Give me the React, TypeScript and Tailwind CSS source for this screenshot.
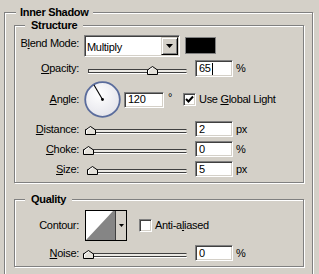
import React from 'react';

const etched = 'border border-[#808080] shadow-[inset_1px_1px_0_#fff,1px_1px_0_#fff]';
const sunken =
  'border border-t-[#808080] border-l-[#808080] border-b-white border-r-white shadow-[inset_1px_1px_0_#404040,inset_-1px_-1px_0_#d4d0c8]';

const K = ({ children }: { children: React.ReactNode }) => (
  <span className="underline underline-offset-[1px]">{children}</span>
);

const Label = ({ children, className = '' }: { children: React.ReactNode; className?: string }) => (
  <div className={`w-[64px] shrink-0 text-right leading-[13px] ${className}`}>{children}</div>
);

const Field = ({ value, className = 'w-[38px] h-[16px]', caret = false }: { value: string; className?: string; caret?: boolean }) => (
  <div className={`${sunken} ${className} bg-white flex items-center pl-[3px] leading-[13px]`}>
    {value}
    {caret && <span className="ml-[1px] inline-block w-[1px] h-[12px] bg-black" />}
  </div>
);

const Thumb = () => (
  <svg width="11" height="9" viewBox="0 0 11 9">
    <polygon points="0.5,8.5 0.5,4 5.5,0.5 10.5,4 10.5,8.5" fill="#e4e1da" stroke="#000" />
    <polyline points="1.5,7.5 1.5,4.5 5.5,1.7" fill="none" stroke="#fff" />
  </svg>
);

const Slider = ({ className, pos }: { className: string; pos: number }) => (
  <div className={`relative h-[16px] shrink-0 ${className}`}>
    <div className="mt-[8px] h-[4px] border border-[#404040] border-r-[#d4d0c8] bg-[#ebe9e4] shadow-[0_1px_0_#fff]" />
    <div className="absolute top-[5px] leading-none" style={{ left: pos }}>
      <Thumb />
    </div>
  </div>
);

const Check = ({ checked }: { checked: boolean }) => (
  <div className={`${sunken} w-[13px] h-[13px] shrink-0 bg-white flex items-center justify-center`}>
    {checked && (
      <svg width="9" height="9" viewBox="0 0 9 9">
        <path d="M1 4 L3.5 6.5 L8 1.5" fill="none" stroke="#000" strokeWidth="2" />
      </svg>
    )}
  </div>
);

const Dial = () => (
  <svg width="37" height="37" viewBox="0 0 37 37" className="shrink-0">
    <defs>
      <radialGradient id="dialFill" cx="0.4" cy="0.35" r="0.7">
        <stop offset="0" stopColor="#ffffff" />
        <stop offset="1" stopColor="#e3e3ea" />
      </radialGradient>
    </defs>
    <circle cx="18.5" cy="18.5" r="17.3" fill="url(#dialFill)" stroke="#5a6c9c" strokeWidth="1.8" />
    <line x1="18.5" y1="18.5" x2="10" y2="4" stroke="#000" strokeWidth="1.1" />
    <circle cx="18.5" cy="18.5" r="1.4" fill="#000" />
  </svg>
);

const GroupTitle = ({ children, className }: { children: React.ReactNode; className: string }) => (
  <div className={`-mt-[7px] self-start bg-[#d4d0c8] leading-[13px] font-bold ${className}`}>{children}</div>
);

export default function App() {
  return (
    <div className="w-[319px] h-[274px] overflow-hidden bg-[#d4d0c8] pt-[12px] pl-[4px] font-['Liberation_Sans',Arial,sans-serif] text-[11px] tracking-[-0.3px] text-black">
      <div className={`${etched} w-[309px] h-[300px] flex flex-col pl-[9px]`}>
        <GroupTitle className="ml-[2px] px-[4px]">Inner Shadow</GroupTitle>

        {/* Structure */}
        <div className={`${etched} mt-[6px] w-[290px] h-[158px] flex flex-col`}>
          <GroupTitle className="ml-[10px] px-[6px]">Structure</GroupTitle>

          <div className="mt-[3px] flex h-[22px] items-start">
            <Label className="mt-[2px]">
              B<K>l</K>end Mode:
            </Label>
            <div className={`${sunken} ml-[5px] w-[96px] h-[22px] bg-white flex`}>
              <div className="flex-1 pl-[2px] pt-[5px] leading-[13px]">Multiply</div>
              <div className="mt-[1px] mr-[1px] w-[17px] h-[18px] bg-[#d4d0c8] border border-t-[#d4d0c8] border-l-[#d4d0c8] border-b-black border-r-black shadow-[inset_1px_1px_0_#fff,inset_-1px_-1px_0_#808080] flex items-center justify-center">
                <svg width="7" height="4" viewBox="0 0 7 4">
                  <polygon points="0,0 7,0 3.5,4" fill="#000" />
                </svg>
              </div>
            </div>
            <div className="ml-[5px] mt-[2px] w-[31px] h-[17px] bg-black border border-[#808080]" />
          </div>

          <div className="mt-[3px] flex h-[17px] items-center">
            <Label>
              <K>O</K>pacity:
            </Label>
            <Slider className="ml-[9px] w-[99px]" pos={59} />
            <Field value="65" className="ml-[8px] w-[38px] h-[17px]" caret />
            <span className="ml-[3px] leading-[13px]">%</span>
          </div>

          <div className="mt-[4px] flex h-[37px] items-center">
            <Label>
              <K>A</K>ngle:
            </Label>
            <div className="ml-[5px] flex">
              <Dial />
            </div>
            <Field value="120" className="ml-[3px] w-[40px] h-[16px]" />
            <span className="ml-[4px] w-[15px] leading-[13px] -mt-[4px]">°</span>
            <Check checked />
            <span className="ml-[3px] leading-[13px]">
              Use <K>G</K>lobal Light
            </span>
          </div>

          <div className="mt-[3px] flex h-[16px] items-center">
            <Label>
              <K>D</K>istance:
            </Label>
            <Slider className="ml-[6px] w-[102px]" pos={0} />
            <Field value="2" className="ml-[8px] w-[38px] h-[16px]" />
            <span className="ml-[3px] leading-[13px]">px</span>
          </div>

          <div className="mt-[4px] flex h-[16px] items-center">
            <Label>
              <K>C</K>hoke:
            </Label>
            <Slider className="ml-[4px] w-[104px]" pos={0} />
            <Field value="0" className="ml-[8px] w-[38px] h-[16px]" />
            <span className="ml-[3px] leading-[13px]">%</span>
          </div>

          <div className="mt-[4px] flex h-[16px] items-center">
            <Label>
              <K>S</K>ize:
            </Label>
            <Slider className="ml-[8px] w-[100px]" pos={0} />
            <Field value="5" className="ml-[8px] w-[38px] h-[16px]" />
            <span className="ml-[3px] leading-[13px]">px</span>
          </div>
        </div>

        {/* Quality */}
        <div className={`${etched} mt-[16px] w-[290px] h-[68px] flex flex-col`}>
          <GroupTitle className="ml-[10px] px-[6px]">Quality</GroupTitle>

          <div className="mt-[4px] flex h-[31px] items-center">
            <Label>Contour:</Label>
            <div className="ml-[6px] w-[42px] h-[31px] border border-black flex">
              <svg width="29" height="29" viewBox="0 0 29 29" className="shrink-0">
                <rect width="29" height="29" fill="#fff" />
                <polygon points="0,29 27,0 29,0 29,29" fill="#858585" />
              </svg>
              <div className="flex-1 bg-[#d4d0c8] border-l border-[#404040] flex items-center justify-center">
                <svg width="5" height="3" viewBox="0 0 5 3">
                  <polygon points="0,0 5,0 2.5,3" fill="#000" />
                </svg>
              </div>
            </div>
            <div className="ml-[12px] flex">
              <Check checked={false} />
            </div>
            <span className="ml-[3px] leading-[13px]">
              Anti-a<K>l</K>iased
            </span>
          </div>

          <div className="mt-[4px] flex h-[16px] items-center">
            <Label>
              <K>N</K>oise:
            </Label>
            <Slider className="ml-[4px] w-[104px]" pos={0} />
            <Field value="0" className="ml-[8px] w-[38px] h-[16px]" />
            <span className="ml-[3px] leading-[13px]">%</span>
          </div>
        </div>
      </div>
    </div>
  );
}
